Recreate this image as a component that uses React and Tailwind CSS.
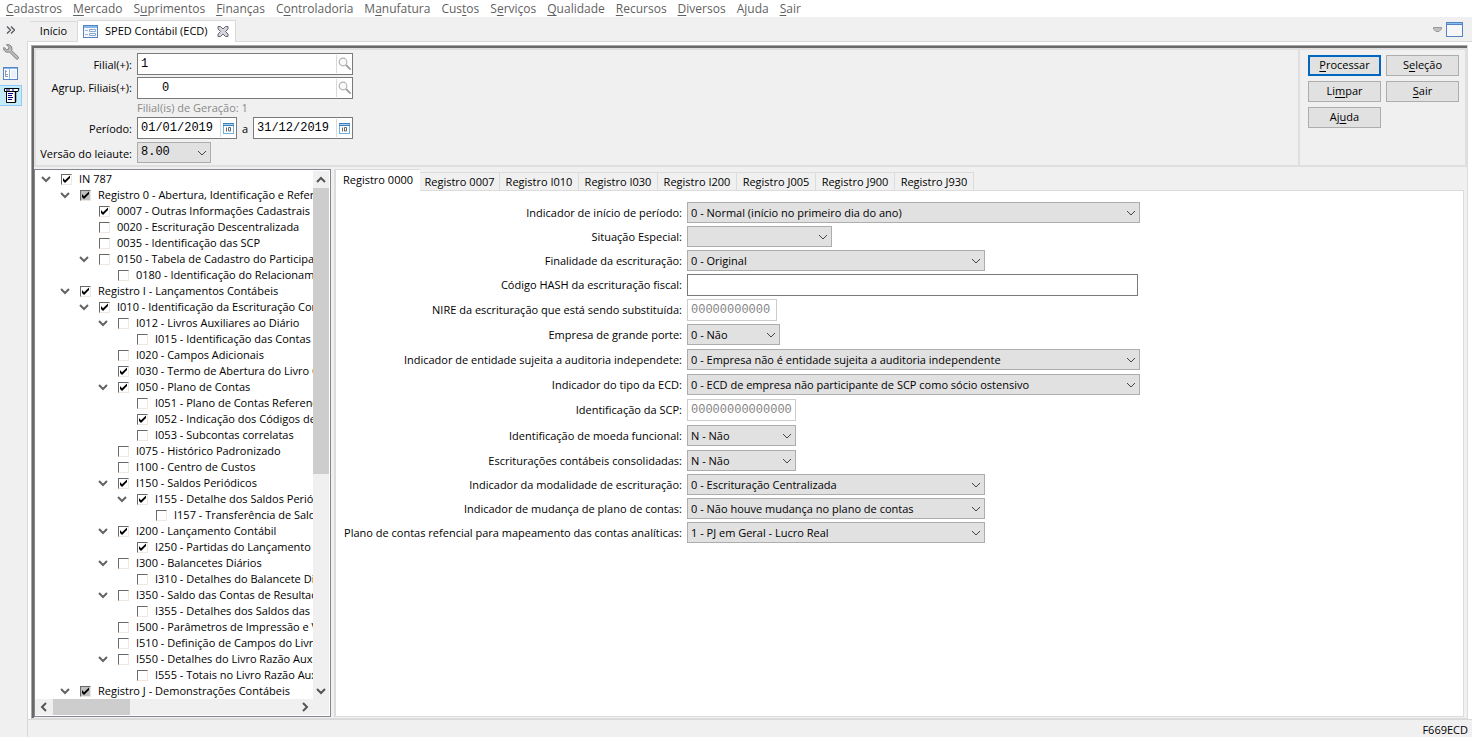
import React from 'react';

const menu = [
  ['', 'C', 'adastros'], ['', 'M', 'ercado'], ['S', 'u', 'primentos'], ['', 'F', 'inanças'],
  ['C', 'o', 'ntroladoria'], ['M', 'a', 'nufatura'], ['Cus', 't', 'os'], ['S', 'e', 'rviços'],
  ['', 'Q', 'ualidade'], ['', 'R', 'ecursos'], ['', 'D', 'iversos'], ['A', 'j', 'uda'], ['', 'S', 'air'],
];

const actions = [
  ['', 'P', 'rocessar'], ['S', 'e', 'leção'], ['Li', 'm', 'par'], ['', 'S', 'air'], ['Aj', 'u', 'da'],
];

// [depth, expandable, state (0 off, 1 on, 2 partial), label]
const tree = [
  [0, 1, 1, 'IN 787'],
  [1, 1, 2, 'Registro 0 - Abertura, Identificação e Referências'],
  [2, 0, 1, '0007 - Outras Informações Cadastrais da Entidade'],
  [2, 0, 0, '0020 - Escrituração Descentralizada'],
  [2, 0, 0, '0035 - Identificação das SCP'],
  [2, 1, 0, '0150 - Tabela de Cadastro do Participante'],
  [3, 0, 0, '0180 - Identificação do Relacionamento'],
  [1, 1, 1, 'Registro I - Lançamentos Contábeis'],
  [2, 1, 1, 'I010 - Identificação da Escrituração Contábil'],
  [3, 1, 0, 'I012 - Livros Auxiliares ao Diário'],
  [4, 0, 0, 'I015 - Identificação das Contas'],
  [3, 0, 0, 'I020 - Campos Adicionais'],
  [3, 0, 1, 'I030 - Termo de Abertura do Livro Contábil'],
  [3, 1, 1, 'I050 - Plano de Contas'],
  [4, 0, 0, 'I051 - Plano de Contas Referencial'],
  [4, 0, 1, 'I052 - Indicação dos Códigos de Aglutinação'],
  [4, 0, 0, 'I053 - Subcontas correlatas'],
  [3, 0, 0, 'I075 - Histórico Padronizado'],
  [3, 0, 0, 'I100 - Centro de Custos'],
  [3, 1, 1, 'I150 - Saldos Periódicos'],
  [4, 1, 1, 'I155 - Detalhe dos Saldos Periódicos'],
  [5, 0, 0, 'I157 - Transferência de Saldos'],
  [3, 1, 1, 'I200 - Lançamento Contábil'],
  [4, 0, 1, 'I250 - Partidas do Lançamento'],
  [3, 1, 0, 'I300 - Balancetes Diários'],
  [4, 0, 0, 'I310 - Detalhes do Balancete Diário'],
  [3, 1, 0, 'I350 - Saldo das Contas de Resultado'],
  [4, 0, 0, 'I355 - Detalhes dos Saldos das'],
  [3, 0, 0, 'I500 - Parâmetros de Impressão e Visualização'],
  [3, 0, 0, 'I510 - Definição de Campos do Livro Razão'],
  [3, 1, 0, 'I550 - Detalhes do Livro Razão Auxiliar'],
  [4, 0, 0, 'I555 - Totais no Livro Razão Auxiliar'],
  [1, 1, 2, 'Registro J - Demonstrações Contábeis'],
];

const indents = ['pl-[4px]', 'pl-[23px]', 'pl-[42px]', 'pl-[61px]', 'pl-[80px]', 'pl-[99px]'];

const tabs = ['0000', '0007', 'I010', 'I030', 'I200', 'J005', 'J900', 'J930'];

const fieldsTop = [
  { l: 'Indicador de início de período:', v: '0 - Normal (início no primeiro dia do ano)', w: 'w-[453px]', h: 'h-[21px]' },
  { l: 'Situação Especial:', v: '', w: 'w-[145px]', h: 'h-[21px]' },
  { l: 'Finalidade da escrituração:', v: '0 - Original', w: 'w-[298px]', h: 'h-[21px]' },
  { l: 'Código HASH da escrituração fiscal:', t: 'text', v: '', w: 'w-[451px]', h: 'h-[22px]' },
  { l: 'NIRE da escrituração que está sendo substituída:', t: 'off', v: '00000000000', w: 'w-[90px]', h: 'h-[22px]' },
  { l: 'Empresa de grande porte:', v: '0 - Não', w: 'w-[93px]', h: 'h-[22px]' },
  { l: 'Indicador de entidade sujeita a auditoria independete:', v: '0 - Empresa não é entidade sujeita a auditoria independente', w: 'w-[453px]', h: 'h-[22px]' },
  { l: 'Indicador do tipo da ECD:', v: '0 - ECD de empresa não participante de SCP como sócio ostensivo', w: 'w-[453px]', h: 'h-[22px]' },
  { l: 'Identificação da SCP:', t: 'off', v: '00000000000000', w: 'w-[109px]', h: 'h-[22px]' },
];

const fieldsBottom = [
  { l: 'Identificação de moeda funcional:', v: 'N - Não', w: 'w-[109px]', h: 'h-[22px]' },
  { l: 'Escriturações contábeis consolidadas:', v: 'N - Não', w: 'w-[109px]', h: 'h-[21px]' },
  { l: 'Indicador da modalidade de escrituração:', v: '0 - Escrituração Centralizada', w: 'w-[298px]', h: 'h-[21px]' },
  { l: 'Indicador de mudança de plano de contas:', v: '0 - Não houve mudança no plano de contas', w: 'w-[298px]', h: 'h-[21px]' },
  { l: 'Plano de contas refencial para mapeamento das contas analíticas:', v: '1 - PJ em Geral - Lucro Real', w: 'w-[298px]', h: 'h-[21px]' },
];

function Mnemonic({ parts }) {
  return <>{parts[0]}<span className="underline underline-offset-2">{parts[1]}</span>{parts[2]}</>;
}

function Chevron({ className = '', d = 'M1 3l4 4 4-4', width = 1 }) {
  return (
    <svg viewBox="0 0 10 10" className={`size-[10px] shrink-0 ${className}`} fill="none" stroke="currentColor" strokeWidth={width}>
      <path d={d} />
    </svg>
  );
}

function Combo({ id, value, className = '', mono }) {
  return (
    <div className={`relative h-[21px] shrink-0 ${className}`}>
      <select id={id} defaultValue={value} className={`block h-full w-full appearance-none border border-[#adadad] bg-[#e1e1e1] pr-5 pl-[3px] leading-[19px] outline-none ${mono ? 'font-["Liberation_Mono",monospace] text-[12px]' : ''}`}>
        <option>{value}</option>
      </select>
      <Chevron className="pointer-events-none absolute top-[6px] right-1 text-[#444]" />
    </div>
  );
}

function Magnifier() {
  return (
    <svg viewBox="0 0 14 14" className="size-[14px]" fill="none">
      <circle cx="5" cy="5" r="3.8" stroke="#b4b4b4" strokeWidth="1.2" fill="#fafafa" />
      <path d="M8 8l4.6 4.6" stroke="#a0a0a0" strokeWidth="1.9" />
    </svg>
  );
}

function CalendarIcon() {
  return (
    <svg viewBox="0 0 11 11" className="size-[11px]">
      <rect x="0.5" y="0.5" width="10" height="10" fill="#fff" stroke="#6fb1de" />
      <path d="M0 0h11v1H0zM0 2h11v1H0z" fill="#3b7dbd" />
      <path d="M1 1h9v1H1z" fill="#a8d4f2" />
      <path d="M3.500 4.500v4M5.500 4.500h2v3.500h-2z" stroke="#666" fill="none" />
    </svg>
  );
}

function EntryBox({ id, value, className, button, icon, pad = 'pl-[3px]' }) {
  return (
    <div className={`flex h-[22px] border border-[#7a7a7a] bg-white ${className}`}>
      <input id={id} defaultValue={value} className={`min-w-0 flex-1 bg-transparent font-["Liberation_Mono",monospace] text-[12px] leading-[18px] whitespace-pre outline-none ${pad}`} />
      <button type="button" aria-label={button} className="my-px flex w-4 shrink-0 items-center justify-center border-l border-[#d9d9d9]">{icon}</button>
    </div>
  );
}

function Field({ f, id }) {
  return (
    <div className={`flex gap-[5px] ${f.h}`}>
      <label htmlFor={id} className="w-[346px] shrink-0 text-right leading-[21px] whitespace-nowrap">{f.l}</label>
      {f.t ? (
        <input id={id} defaultValue={f.v} disabled={f.t === 'off'} className={`h-[22px] shrink-0 border bg-white pl-[3px] font-["Liberation_Mono",monospace] text-[12px] outline-none ${f.w} ${f.t === 'off' ? 'border-[#cccccc] text-[#838383]' : 'border-[#7a7a7a]'}`} />
      ) : (
        <Combo id={id} value={f.v} className={f.w} />
      )}
    </div>
  );
}

function TreeRow({ row: [depth, open, state, label] }) {
  return (
    <li className={`flex h-4 items-center ${indents[depth]}`}>
      <span className="flex w-[22px] shrink-0">{open ? <Chevron width={2} className="ml-[2px] text-[#646464]" /> : null}</span>
      <label className="flex items-center gap-[7px] whitespace-nowrap">
        <span className="relative size-[11px] shrink-0">
          <input type="checkbox" defaultChecked={state > 0} className={`block size-[11px] appearance-none border border-t-[#696969] border-r-[#f0e8e0] border-b-[#f0e8e0] border-l-[#696969] ${state === 2 ? 'bg-[#c0c0c0]' : 'bg-white'}`} />
          {state > 0 && (
            <svg viewBox="0 0 11 11" className="pointer-events-none absolute inset-0 size-[11px]">
              <path d="M2 4v3l2 2 5-5V1.500L4 6.200z" fill="#000" />
            </svg>
          )}
        </span>
        {label}
      </label>
    </li>
  );
}

function FormIcon() {
  return (
    <svg viewBox="0 0 15 13" className="h-[13px] w-[15px]">
      <rect x="0.5" y="0.5" width="14" height="12" fill="#f4f8fd" stroke="#5583c4" />
      <path d="M1 1h13v2H1z" fill="#86b8ea" />
      <path d="M2 5.500h3M2 9.500h3" stroke="#a0b4cc" />
      <path d="M6.500 4.500h6v2h-6zM6.500 8.500h6v2h-6z" stroke="#8aa9cc" fill="#fff" />
    </svg>
  );
}

function SideBar() {
  return (
    <nav className="w-[27px] shrink-0 bg-[#f0f0f0]" aria-label="Atalhos">
      <button type="button" aria-label="Expandir" className="flex h-[26px] w-[21px] items-center justify-center">
        <svg viewBox="0 0 9 8" className="h-2 w-[9px]" fill="none" stroke="#55555f" strokeWidth="1.300"><path d="M1 .5L4.500 4 1 7.500M5 .5L8.500 4 5 7.500" /></svg>
      </button>
      <button type="button" aria-label="Ferramentas" className="flex h-[18px] w-[22px] items-center justify-center">
        <svg viewBox="0 0 16 16" className="size-4">
          <path d="M3.500.7L6 3.200 5.500 5.200 3.400 5.600.9 3.300C.2 5.200 1.200 7.500 3.500 8.100 4.700 8.400 5.700 8.200 6.500 8L12.800 14.600C13.700 15.600 15.300 15.200 15.500 14 15.600 13.400 15.300 12.900 14.900 12.500L8.600 6.500C9.200 5 9 3.300 7.900 2 6.700.7 5 .2 3.500.7z" fill="#bdbdbd" stroke="#777" strokeWidth=".9" />
        </svg>
      </button>
      <button type="button" aria-label="Painéis" className="flex h-[24px] w-[21px] items-center justify-center">
        <svg viewBox="0 0 15 13" className="h-[13px] w-[15px]">
          <rect x="0.5" y="0.5" width="14" height="12" fill="#fff" stroke="#5583c4" />
          <path d="M1 1h13v1H1z" fill="#86b8ea" />
          <path d="M6.500 2v10" stroke="#8fb4e0" />
          <path d="M2.500 3v7M2 4.500h2M3 7.500h2M3 9.500h2" stroke="#8a9db5" />
          <path d="M8 3h5v8H8z" fill="#e9f1fa" />
        </svg>
      </button>
      <button type="button" aria-label="Menu" className="flex h-[21px] w-[22px] items-center justify-end border border-l-0 border-[#90c8f6] bg-[#c4ebfa] pr-px">
        <svg viewBox="0 0 16 15" className="h-[15px] w-4">
          <path d="M2.500 3.500h9V14.500h-9z" fill="#fff" stroke="#000" />
          <path d="M.5.5h14.500l-1 3H.5z" fill="#fff" stroke="#000" />
          <path d="M2 1.500h4v1H2zM8 1.500h2v1H8z" fill="#000080" />
          <path d="M4 5.500h5M4 7.500h4M4 9.500h5M4 11.500h4" stroke="#000080" />
          <path d="M11.500 4v10" stroke="#000" strokeWidth="1.500" fill="none" />
        </svg>
      </button>
    </nav>
  );
}

function TopForm() {
  return (
    <div className="flex h-[119px] border-2 border-[#dfdfdf]">
      <form className="grid flex-1 grid-cols-[96px_1fr] content-start gap-x-[5px] pt-[3px]">
        <label htmlFor="filial" className="text-right leading-6 whitespace-nowrap">Filial(+):</label>
        <EntryBox id="filial" value="1" className="w-[216px]" button="Pesquisar filial" icon={<Magnifier />} />
        <label htmlFor="agrup" className="text-right leading-[22px] whitespace-nowrap">Agrup. Filiais(+):</label>
        <EntryBox id="agrup" value="0" pad="pl-6" className="w-[216px]" button="Pesquisar agrupamento" icon={<Magnifier />} />
        <p className="col-start-2 leading-[18px] text-[#8a8a8a]">Filial(is) de Geração: 1</p>
        <label htmlFor="inicio" className="text-right leading-6 whitespace-nowrap">Período:</label>
        <div className="flex items-start">
          <EntryBox id="inicio" value="01/01/2019" className="w-[100px]" button="Calendário inicial" icon={<CalendarIcon />} />
          <label htmlFor="fim" className="w-4 text-center leading-6">a</label>
          <EntryBox id="fim" value="31/12/2019" className="w-[100px]" button="Calendário final" icon={<CalendarIcon />} />
        </div>
        <label htmlFor="versao" className="text-right leading-[26px] whitespace-nowrap">Versão do leiaute:</label>
        <Combo id="versao" value="8.00" mono className="mt-px w-[74px]" />
      </form>
      <div className="grid w-[167px] grid-cols-[73px_73px] content-start gap-[5px] border-l-2 border-[#dfdfdf] pt-[5px] pl-2">
        {actions.map((a, i) => (
          <button key={i} type="button" className={`h-[21px] bg-[#e1e1e1] ${i === 0 ? 'border-2 border-[#0067c0]' : 'border border-[#adadad]'}`}><Mnemonic parts={a} /></button>
        ))}
      </div>
    </div>
  );
}

function TreePanel() {
  return (
    <section className="flex w-[297px] shrink-0 flex-col border border-[#828790] bg-white py-px pr-px" aria-label="Registros">
      <div className="flex min-h-0 flex-1">
        <ul className="min-w-0 flex-1 overflow-hidden">
          {tree.map((r, i) => <TreeRow key={i} row={r} />)}
        </ul>
        <div className="flex w-4 flex-col items-center bg-[#f0f0f0] text-[#555]">
          <div className="flex h-[17px] items-center"><Chevron width={2} d="M1 7l4-4 4 4" /></div>
          <div className="h-[286px] w-full bg-[#cdcdcd]" />
          <div className="mt-auto flex h-[17px] items-center"><Chevron width={2} /></div>
        </div>
      </div>
      <div className="flex h-4 items-center bg-[#f0f0f0] text-[#555]">
        <div className="flex w-[18px] justify-center"><Chevron width={2} d="M7 1L3 5l4 4" /></div>
        <div className="h-full w-[77px] bg-[#cdcdcd]" />
        <div className="mr-4 ml-auto flex w-[17px] justify-center"><Chevron width={2} d="M3 1l4 4-4 4" /></div>
      </div>
    </section>
  );
}

function TabFolder() {
  return (
    <section className="flex min-w-0 flex-1 flex-col">
      <div role="tablist" className="flex items-end">
        <button type="button" role="tab" aria-selected="true" className="h-[22px] w-[86px] border-t border-l-2 border-[#dcdcdc] bg-white whitespace-nowrap">Registro {tabs[0]}</button>
        {tabs.slice(1).map((t, i) => (
          <button key={t} type="button" role="tab" aria-selected="false" className={`h-[19px] border border-l-0 border-[#dcdcdc] pt-px whitespace-nowrap ${i === 0 ? 'w-20 border-l' : 'w-[79px]'}`}>Registro {t}</button>
        ))}
        <div className="flex-1 border-b border-[#dcdcdc]" />
      </div>
      <div className="flex flex-1 flex-col gap-1 border-r border-b border-l-2 border-[#dcdcdc] bg-white pt-[11px]">
        <div className="flex flex-col gap-[3px]">
          {fieldsTop.map((f, i) => <Field key={i} f={f} id={`campo-${i}`} />)}
        </div>
        <div className="flex flex-col gap-[3px]">
          {fieldsBottom.map((f, i) => <Field key={i} f={f} id={`campo-${i + 9}`} />)}
        </div>
      </div>
    </section>
  );
}

export default function App() {
  return (
    <div className='flex min-h-screen flex-col bg-[#f0f0f0] font-["Open_Sans","Noto_Sans",sans-serif] text-[11px] text-black'>
      <nav className="flex h-[17px] gap-[11px] bg-white pl-[6px] text-[12px] leading-[17px] text-[#5f5f5f]">
        {menu.map((m, i) => <a key={i} href="#"><Mnemonic parts={m} /></a>)}
      </nav>
      <div className="flex flex-1">
        <SideBar />
        <div className="flex min-w-0 flex-1 flex-col">
          <div className="flex h-[25px] items-end border-b border-[#d9d9d9] pl-[3px]">
            <button type="button" className="h-5 w-12 border-t border-r border-[#d9d9d9]">Início</button>
            <div className="-mb-px flex h-[22px] w-[158px] items-center border-t border-r border-[#d9d9d9] bg-white pl-[5px]">
              <FormIcon />
              <button type="button" className="ml-[7px] whitespace-nowrap">SPED Contábil (ECD)</button>
              <button type="button" aria-label="Fechar" className="mr-[6px] ml-auto">
                <svg viewBox="0 0 12 11" className="h-[11px] w-3"><path d="M1 .5h2.500L6 3l2.500-2.500H11v2.500L8.500 5.500 11 8v2.500H8.500L6 8l-2.500 2.500H1V8l2.500-2.500L1 3z" fill="#d4d4dc" stroke="#666673" /></svg>
              </button>
            </div>
            <div className="mr-[9px] mb-1 ml-auto flex items-center gap-1">
              <button type="button" aria-label="Lista"><svg viewBox="0 0 9 6" className="h-[6px] w-[9px]"><path d="M.5.5h8v1.500L6 4.500H3L.5 2z" fill="#c0c0c0" stroke="#999" /></svg></button>
              <button type="button" aria-label="Maximizar"><svg viewBox="0 0 17 15" className="h-[15px] w-[17px]"><rect x=".5" y=".5" width="16" height="14" fill="#f7f7f9" stroke="#5583c4" /><path d="M1 1h15v1H1z" fill="#86c0ee" /><path d="M1 2h15v1H1z" fill="#5583c4" /></svg></button>
            </div>
          </div>
          <div className="flex flex-1 flex-col border-l border-[#d9d9d9]">
            <div className="flex flex-1 flex-col bg-white pt-[3px] pl-[3px]">
              <main className="mr-1 flex flex-1 flex-col border border-t-[#a8a8a8] border-r-[#dcdcdc] border-b-[#dcdcdc] border-l-[#a8a8a8] bg-[#f0f0f0]">
                <div className="flex flex-1 flex-col border-t-2 border-l-2 border-[#696969]">
                  <TopForm />
                  <div className="mt-[2px] flex flex-1 gap-[3px] pr-[3px] pb-px">
                    <TreePanel />
                    <TabFolder />
                  </div>
                </div>
              </main>
            </div>
            <footer className="flex h-[21px] items-center justify-end border-t border-[#d9d9d9] bg-[#f0f0f0] pr-1">F669ECD</footer>
          </div>
        </div>
      </div>
    </div>
  );
}
